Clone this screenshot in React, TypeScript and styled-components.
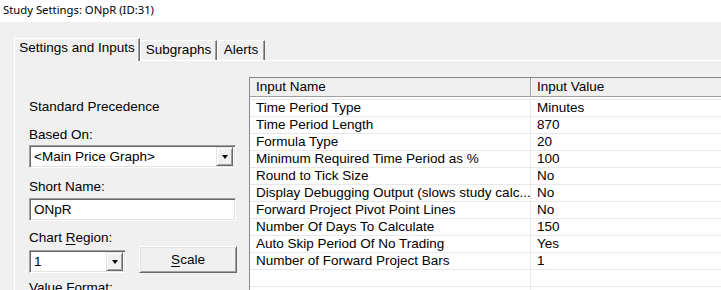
import React from 'react';
import styled, { createGlobalStyle } from 'styled-components';

const GlobalStyle = createGlobalStyle`
  html, body {
    margin: 0;
    padding: 0;
    background: #f0f0f0;
  }
  body {
    font-family: "Liberation Sans", Arial, sans-serif;
    font-size: 13.5px;
    color: #000;
    overflow: hidden;
  }
`;

const Window = styled.div`
  width: 721px;
  height: 290px;
  overflow: hidden;
  background: #f0f0f0;
`;

const TitleBar = styled.div`
  height: 22px;
  box-sizing: border-box;
  background: #fff;
  padding-left: 3px;
  font-family: "Noto Sans", sans-serif;
  font-size: 11.3px;
  line-height: 20px;
`;

const Body = styled.div`
  padding: 16px 0 0 14px;
`;

const TabStrip = styled.div`
  display: flex;
  align-items: flex-end;
  height: 22px;
  position: relative;
  z-index: 1;
`;

const Tab = styled.div<{ $active?: boolean; $w: number }>`
  box-sizing: border-box;
  width: ${(p) => p.$w}px;
  height: ${(p) => (p.$active ? 23 : 20)}px;
  margin-bottom: ${(p) => (p.$active ? -1 : 0)}px;
  padding-top: 1px;
  border-top: 1px solid #fff;
  border-left: 1px solid #fff;
  border-right: 1px solid #696969;
  box-shadow: inset -1px 0 #a0a0a0;
  background: #f0f0f0;
  line-height: 16px;
  text-align: center;
  white-space: nowrap;
`;

const Panel = styled.div`
  display: flex;
  gap: 12px;
  height: 240px;
  padding-left: 14px;
  border-top: 1px solid #fff;
  border-left: 1px solid #fff;
`;

const LeftCol = styled.div`
  width: 208px;
  flex-shrink: 0;
  padding-top: 38px;
`;

const Label = styled.div<{ $mt?: number }>`
  line-height: 16px;
  margin-top: ${(p) => p.$mt ?? 0}px;
  white-space: nowrap;
  u {
    text-decoration: underline;
    text-underline-offset: 2px;
  }
`;

const Sunken = styled.div<{ $w: number; $mt?: number }>`
  box-sizing: border-box;
  width: ${(p) => p.$w}px;
  height: 23px;
  margin-top: ${(p) => p.$mt ?? 0}px;
  display: flex;
  align-items: center;
  background: #fff;
  border-top: 1px solid #a0a0a0;
  border-left: 1px solid #a0a0a0;
  border-bottom: 1px solid #fff;
  border-right: 1px solid #fff;
  box-shadow: inset 1px 1px #696969, inset -1px -1px #e3e3e3;
  padding: 0 2px 0 4px;
  white-space: nowrap;
`;

const FieldText = styled.span`
  flex: 1;
  line-height: 16px;
`;

const DropButton = styled.div`
  box-sizing: border-box;
  width: 17px;
  height: 19px;
  background: #f0f0f0;
  border-top: 1px solid #e3e3e3;
  border-left: 1px solid #e3e3e3;
  border-right: 1px solid #696969;
  border-bottom: 1px solid #696969;
  box-shadow: inset 1px 1px #fff, inset -1px -1px #a0a0a0;
  display: flex;
  align-items: center;
  justify-content: center;
`;

const Arrow = styled.div`
  width: 0;
  height: 0;
  border-left: 3.5px solid transparent;
  border-right: 3.5px solid transparent;
  border-top: 4px solid #000;
  margin-top: 1px;
`;

const RegionRow = styled.div`
  display: flex;
  align-items: flex-end;
  gap: 13px;
`;

const Button = styled.div`
  box-sizing: border-box;
  width: 98px;
  height: 27px;
  background: #f0f0f0;
  border-top: 1px solid #fff;
  border-left: 1px solid #fff;
  border-right: 1px solid #696969;
  border-bottom: 1px solid #696969;
  box-shadow: inset 1px 1px #e3e3e3, inset -1px -1px #a0a0a0;
  display: flex;
  align-items: center;
  justify-content: center;
  line-height: 16px;
  u {
    text-decoration: underline;
    text-underline-offset: 2px;
  }
`;

const Table = styled.div`
  margin-top: 16px;
  width: 520px;
  flex-shrink: 0;
  background: #fff;
  border-top: 1px solid #828790;
  border-left: 1px solid #828790;
`;

const HeaderRow = styled.div`
  display: flex;
  height: 18px;
  background: #f0f0f0;
  border-bottom: 1px solid #a0a0a0;
`;

const HeaderCell = styled.div<{ $w?: number }>`
  box-sizing: border-box;
  width: ${(p) => (p.$w ? `${p.$w}px` : 'auto')};
  flex: ${(p) => (p.$w ? 'none' : '1')};
  padding-left: 6px;
  line-height: 17px;
  border-right: ${(p) => (p.$w ? '1px solid #a0a0a0' : 'none')};
  box-shadow: ${(p) => (p.$w ? '1px 0 #fff' : 'none')};
  white-space: nowrap;
`;

const Rows = styled.div`
  padding-top: 2px;
`;

const Row = styled.div`
  display: flex;
  height: 17px;
  box-sizing: border-box;
  border-top: 1px solid #e8e8e8;
`;

const Cell = styled.div<{ $w?: number }>`
  box-sizing: border-box;
  width: ${(p) => (p.$w ? `${p.$w}px` : 'auto')};
  flex: ${(p) => (p.$w ? 'none' : '1')};
  padding-left: 6px;
  line-height: 16px;
  border-right: ${(p) => (p.$w ? '1px solid #e8e8e8' : 'none')};
  white-space: nowrap;
  overflow: hidden;
`;

const inputs: [string, string][] = [
  ['Time Period Type', 'Minutes'],
  ['Time Period Length', '870'],
  ['Formula Type', '20'],
  ['Minimum Required Time Period as %', '100'],
  ['Round to Tick Size', 'No'],
  ['Display Debugging Output (slows study calc...', 'No'],
  ['Forward Project Pivot Point Lines', 'No'],
  ['Number Of Days To Calculate', '150'],
  ['Auto Skip Period Of No Trading', 'Yes'],
  ['Number of Forward Project Bars', '1'],
  ['', ''],
  ['', ''],
];

const NAME_COL = 281;

const App: React.FC = () => {
  return (
    <Window>
      <GlobalStyle />
      <TitleBar>Study Settings: ONpR (ID:31)</TitleBar>
      <Body>
        <TabStrip>
          <Tab $active $w={126}>Settings and Inputs</Tab>
          <Tab $w={77}>Subgraphs</Tab>
          <Tab $w={48}>Alerts</Tab>
        </TabStrip>
        <Panel>
          <LeftCol>
            <Label>Standard Precedence</Label>
            <Label $mt={12}>Based On:</Label>
            <Sunken $w={207} $mt={2}>
              <FieldText>&lt;Main Price Graph&gt;</FieldText>
              <DropButton><Arrow /></DropButton>
            </Sunken>
            <Label $mt={11}>Short Name:</Label>
            <Sunken $w={207} $mt={3}>
              <FieldText>ONpR</FieldText>
            </Sunken>
            <Label $mt={9}>Chart <u>R</u>egion:</Label>
            <RegionRow>
              <Sunken $w={97}>
                <FieldText>1</FieldText>
                <DropButton><Arrow /></DropButton>
              </Sunken>
              <Button><span><u>S</u>cale</span></Button>
            </RegionRow>
            <Label $mt={7}>Value Format:</Label>
          </LeftCol>
          <Table>
            <HeaderRow>
              <HeaderCell $w={NAME_COL}>Input Name</HeaderCell>
              <HeaderCell>Input Value</HeaderCell>
            </HeaderRow>
            <Rows>
              {inputs.map(([name, value], i) => (
                <Row key={i}>
                  <Cell $w={NAME_COL}>{name}</Cell>
                  <Cell>{value}</Cell>
                </Row>
              ))}
            </Rows>
          </Table>
        </Panel>
      </Body>
    </Window>
  );
};

export default App;
